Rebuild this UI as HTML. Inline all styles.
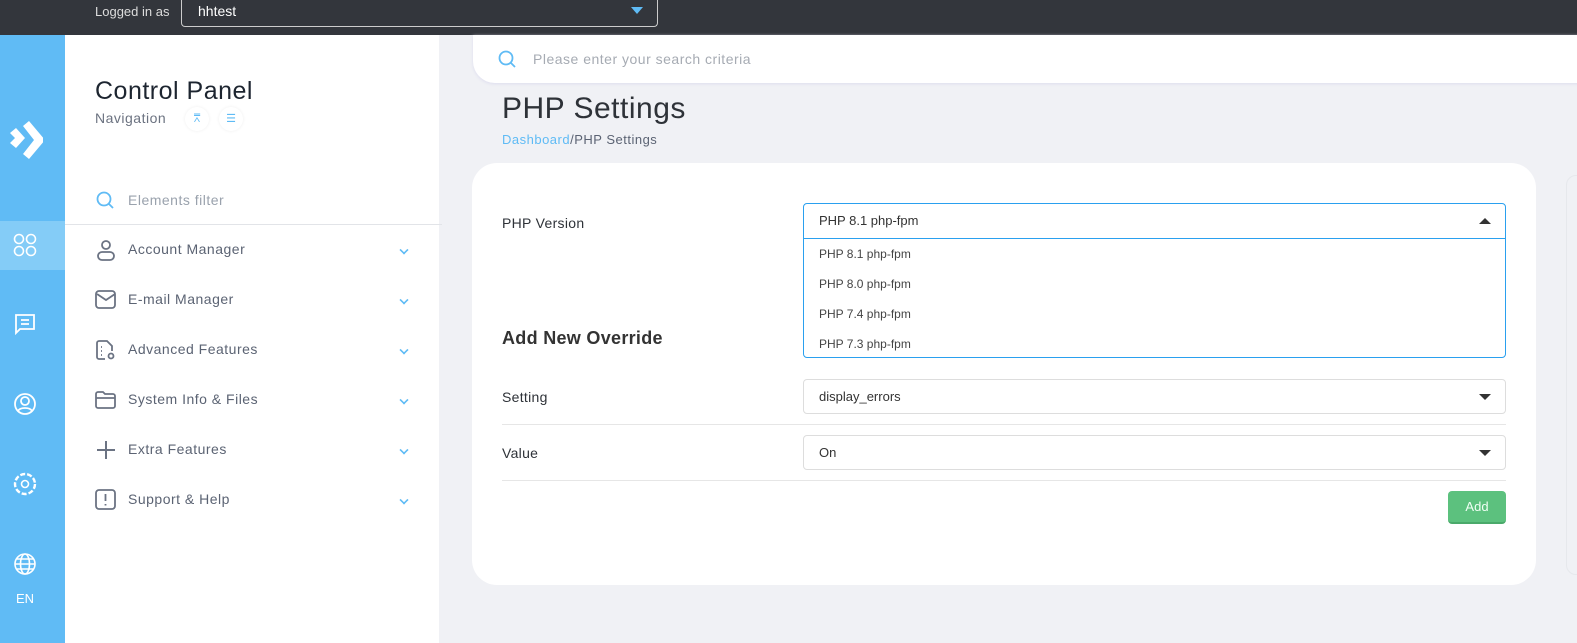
<!DOCTYPE html>
<html><head><meta charset="utf-8"><style>
*{box-sizing:border-box;margin:0;padding:0}
body{width:1577px;height:643px;overflow:hidden;background:#f0f1f5;font-family:"Liberation Sans",sans-serif;position:relative}
.top{position:absolute;left:0;top:0;width:1577px;height:35px;background:#33363c}
.top .lg{position:absolute;left:95px;top:4px;color:#ddd;font-size:13px}
.top .sel{position:absolute;left:181px;top:-2px;width:477px;height:29px;border:1px solid #ccc;border-top:none;border-radius:0 0 4px 4px;color:#fff;font-size:14px;padding:5px 16px}
.top .sel:after{content:"";position:absolute;right:14px;top:9px;border:6px solid transparent;border-top:7px solid #5fbbf5}
.rail{position:absolute;left:0;top:35px;width:65px;height:608px;background:#60bbf5}
.rail .act{position:absolute;left:0;top:186px;width:65px;height:49px;background:#84ccf7}
.rail svg{position:absolute}
.side{position:absolute;left:65px;top:35px;width:377px;height:608px;background:#fff;border-right:3px solid #f0f1f5}
.side h1{position:absolute;left:30px;top:42px;font-size:25px;font-weight:normal;color:#1d2530;letter-spacing:.5px}
.side .nav{position:absolute;left:30px;top:75px;font-size:14px;color:#6b7280;letter-spacing:.5px}
.side .pin{position:absolute;top:72px;width:24px;height:24px;border-radius:50%;background:#fff;box-shadow:0 0 3px #eee;color:#5fbbf5;font-size:11px;text-align:center;line-height:24px}
.filter{position:absolute;left:0;top:152px;width:377px;height:38px;border-bottom:1px solid #e2e4e8}
.filter span{position:absolute;left:63px;top:5px;color:#9aa2ad;font-size:14px;letter-spacing:.5px}
.item{position:absolute;left:0;width:377px;height:30px}
.item span{position:absolute;left:63px;top:6px;font-size:14px;color:#5b6373;letter-spacing:.5px}
.item svg.i{position:absolute;left:30px;top:4px}
.item .ch{position:absolute;left:335px;top:11px;width:8px;height:8px;border-right:2px solid #5fbbf5;border-bottom:2px solid #5fbbf5;transform:rotate(45deg) scale(.8)}
.search{position:absolute;left:473px;top:35px;width:1110px;height:48px;background:#fff;border-radius:0 0 0 22px;box-shadow:0 1px 3px #dde}
.search span{position:absolute;left:60px;top:16px;font-size:14px;color:#a6abb3;letter-spacing:.5px}
.title{position:absolute;left:502px;top:92px;font-size:30px;color:#2e3238;letter-spacing:.5px}
.bc{position:absolute;left:502px;top:132px;font-size:13px;color:#5b6373;letter-spacing:.5px}
.bc b{font-weight:normal;color:#5fbbf5}
.card{position:absolute;left:472px;top:163px;width:1064px;height:422px;background:#fff;border-radius:25px}
.rcard{position:absolute;left:1566px;top:175px;width:20px;height:400px;border:1px solid #e6e8ec;border-radius:10px;background:#f0f1f5}
.lbl{position:absolute;left:502px;font-size:14px;color:#2e3238;letter-spacing:.3px}
.fs{position:absolute;left:803px;width:703px;height:35px;border:1px solid #ddd;border-radius:4px;font-size:13px;color:#333;padding:9px 15px;background:#fff}
.fs:after{content:"";position:absolute;right:14px;top:14px;border:6px solid transparent;border-top:6px solid #333}
.dd{position:absolute;left:803px;top:203px;width:703px;height:155px;border:1px solid #2aa0ef;border-radius:4px;background:#fff}
.dd .h{height:35px;border-bottom:1px solid #2aa0ef;padding:9px 15px;font-size:13px;color:#333;position:relative}
.dd .h:after{content:"";position:absolute;right:14px;top:8px;border:6px solid transparent;border-bottom:6px solid #333}
.dd .o{height:30px;padding:8px 15px;font-size:12px;color:#444}
.hr{position:absolute;left:502px;width:1004px;height:1px;background:#e6e6e6}
.btn{position:absolute;left:1448px;top:491px;width:58px;height:33px;background:#5cc17e;border-radius:4px;border-bottom:2px solid #4aa96a;color:#f0fff4;font-size:13px;text-align:center;line-height:32px}
</style></head><body>
<div class="top"><div class="lg">Logged in as</div><div class="sel">hhtest</div></div>
<div class="rail">
<div class="act"></div>
<svg style="left:7px;top:85px" width="36" height="40" viewBox="0 0 36 40"><path d="M3 13l6-5 9 10-9 10-6-5 5-5z" fill="#fff"/><path d="M16 6l6-5 16 19-16 19-6-5 11-14z" fill="#fff"/></svg>
<svg style="left:13px;top:198px" width="24" height="24" viewBox="0 0 24 24" fill="none" stroke="#fff" stroke-width="1.6"><circle cx="6" cy="6" r="4.5"/><circle cx="18" cy="6" r="4.5"/><circle cx="6" cy="18" r="4.5"/><circle cx="18" cy="18" r="4.5"/></svg>
<svg style="left:13px;top:278px" width="24" height="22" viewBox="0 0 24 22" fill="none" stroke="#fff" stroke-width="1.8"><path d="M3 2h18v14H7l-4 4z"/><path d="M8 7h8M8 11h8"/></svg>
<svg style="left:13px;top:357px" width="24" height="24" viewBox="0 0 24 24" fill="none" stroke="#fff" stroke-width="1.8"><circle cx="12" cy="12" r="10"/><circle cx="12" cy="9" r="4"/><path d="M5 19c2-4 12-4 14 0"/></svg>
<svg style="left:12px;top:436px" width="26" height="26" viewBox="0 0 26 26" fill="none" stroke="#fff" stroke-width="2.4" stroke-dasharray="5 2"><circle cx="13" cy="13" r="10"/><circle cx="13" cy="13" r="3.5" stroke-dasharray="none" stroke-width="1.6"/></svg>
<svg style="left:13px;top:517px" width="24" height="24" viewBox="0 0 24 24" fill="none" stroke="#fff" stroke-width="1.6"><circle cx="12" cy="12" r="10"/><ellipse cx="12" cy="12" rx="4.5" ry="10"/><path d="M2 12h20M4 7h16M4 17h16"/></svg>
<div style="position:absolute;left:16px;top:556px;color:#fff;font-size:13px">EN</div>
</div>
<div class="side">
<h1>Control Panel</h1>
<div class="nav">Navigation</div>
<div class="pin" style="left:120px">&#x2A5E;</div><div class="pin" style="left:154px">&#x2630;</div>
<div class="filter"><svg style="position:absolute;left:31px;top:4px" width="18" height="18" viewBox="0 0 18 18" fill="none" stroke="#5fbbf5" stroke-width="1.8"><circle cx="8" cy="8" r="6.5"/><path d="M13 13l4 4"/></svg><span>Elements filter</span></div>
<div class="item" style="top:200px"><svg class="i" width="22" height="22" viewBox="0 0 22 22" fill="none" stroke="#6b7383" stroke-width="1.8"><circle cx="11" cy="6" r="4"/><rect x="3" y="13" width="16" height="8" rx="4"/></svg><span>Account Manager</span><i class="ch"></i></div>
<div class="item" style="top:250px"><svg class="i" width="22" height="22" viewBox="0 0 22 22" fill="none" stroke="#6b7383" stroke-width="1.8"><rect x="1" y="2" width="19" height="17" rx="3"/><path d="M2 5l9 6 9-6"/></svg><span>E-mail Manager</span><i class="ch"></i></div>
<div class="item" style="top:300px"><svg class="i" width="22" height="22" viewBox="0 0 22 22" fill="none" stroke="#6b7383" stroke-width="1.8"><path d="M10 20H4a2 2 0 01-2-2V4a2 2 0 012-2h8l5 5v5"/><path d="M6 8h1M6 12h1M6 16h1"/><circle cx="16" cy="17" r="2.5"/></svg><span>Advanced Features</span><i class="ch"></i></div>
<div class="item" style="top:350px"><svg class="i" width="22" height="22" viewBox="0 0 22 22" fill="none" stroke="#6b7383" stroke-width="1.8"><path d="M1 5a2 2 0 012-2h5l2 2h8a2 2 0 012 2v10a2 2 0 01-2 2H3a2 2 0 01-2-2z"/><path d="M1 9h19"/></svg><span>System Info &amp; Files</span><i class="ch"></i></div>
<div class="item" style="top:400px"><svg class="i" width="22" height="22" viewBox="0 0 22 22" fill="none" stroke="#6b7383" stroke-width="2"><path d="M11 2v18M2 11h18"/></svg><span>Extra Features</span><i class="ch"></i></div>
<div class="item" style="top:450px"><svg class="i" width="22" height="22" viewBox="0 0 22 22" fill="none" stroke="#6b7383" stroke-width="1.8"><rect x="1" y="1" width="19" height="19" rx="3"/><path d="M10.5 5v7M10.5 15v1.5"/></svg><span>Support &amp; Help</span><i class="ch"></i></div>
</div>
<div class="search"><svg style="position:absolute;left:25px;top:15px" width="18" height="18" viewBox="0 0 18 18" fill="none" stroke="#5fbbf5" stroke-width="1.8"><circle cx="8" cy="8" r="6.5"/><path d="M13 13l4 4"/></svg><span>Please enter your search criteria</span></div>
<div class="title">PHP Settings</div>
<div class="bc"><b>Dashboard</b>/PHP Settings</div>
<div class="card"></div>
<div class="rcard"></div>
<div class="lbl" style="top:215px">PHP Version</div>
<div class="lbl" style="top:328px;font-size:18px;font-weight:bold;color:#333">Add New Override</div>
<div class="lbl" style="top:389px">Setting</div>
<div class="lbl" style="top:445px">Value</div>
<div class="fs" style="top:379px">display_errors</div>
<div class="hr" style="top:424px"></div>
<div class="fs" style="top:435px">On</div>
<div class="hr" style="top:480px"></div>
<div class="btn">Add</div>
<div class="dd"><div class="h">PHP 8.1 php-fpm</div>
<div class="o">PHP 8.1 php-fpm</div><div class="o">PHP 8.0 php-fpm</div><div class="o">PHP 7.4 php-fpm</div><div class="o">PHP 7.3 php-fpm</div></div>
</body></html>
